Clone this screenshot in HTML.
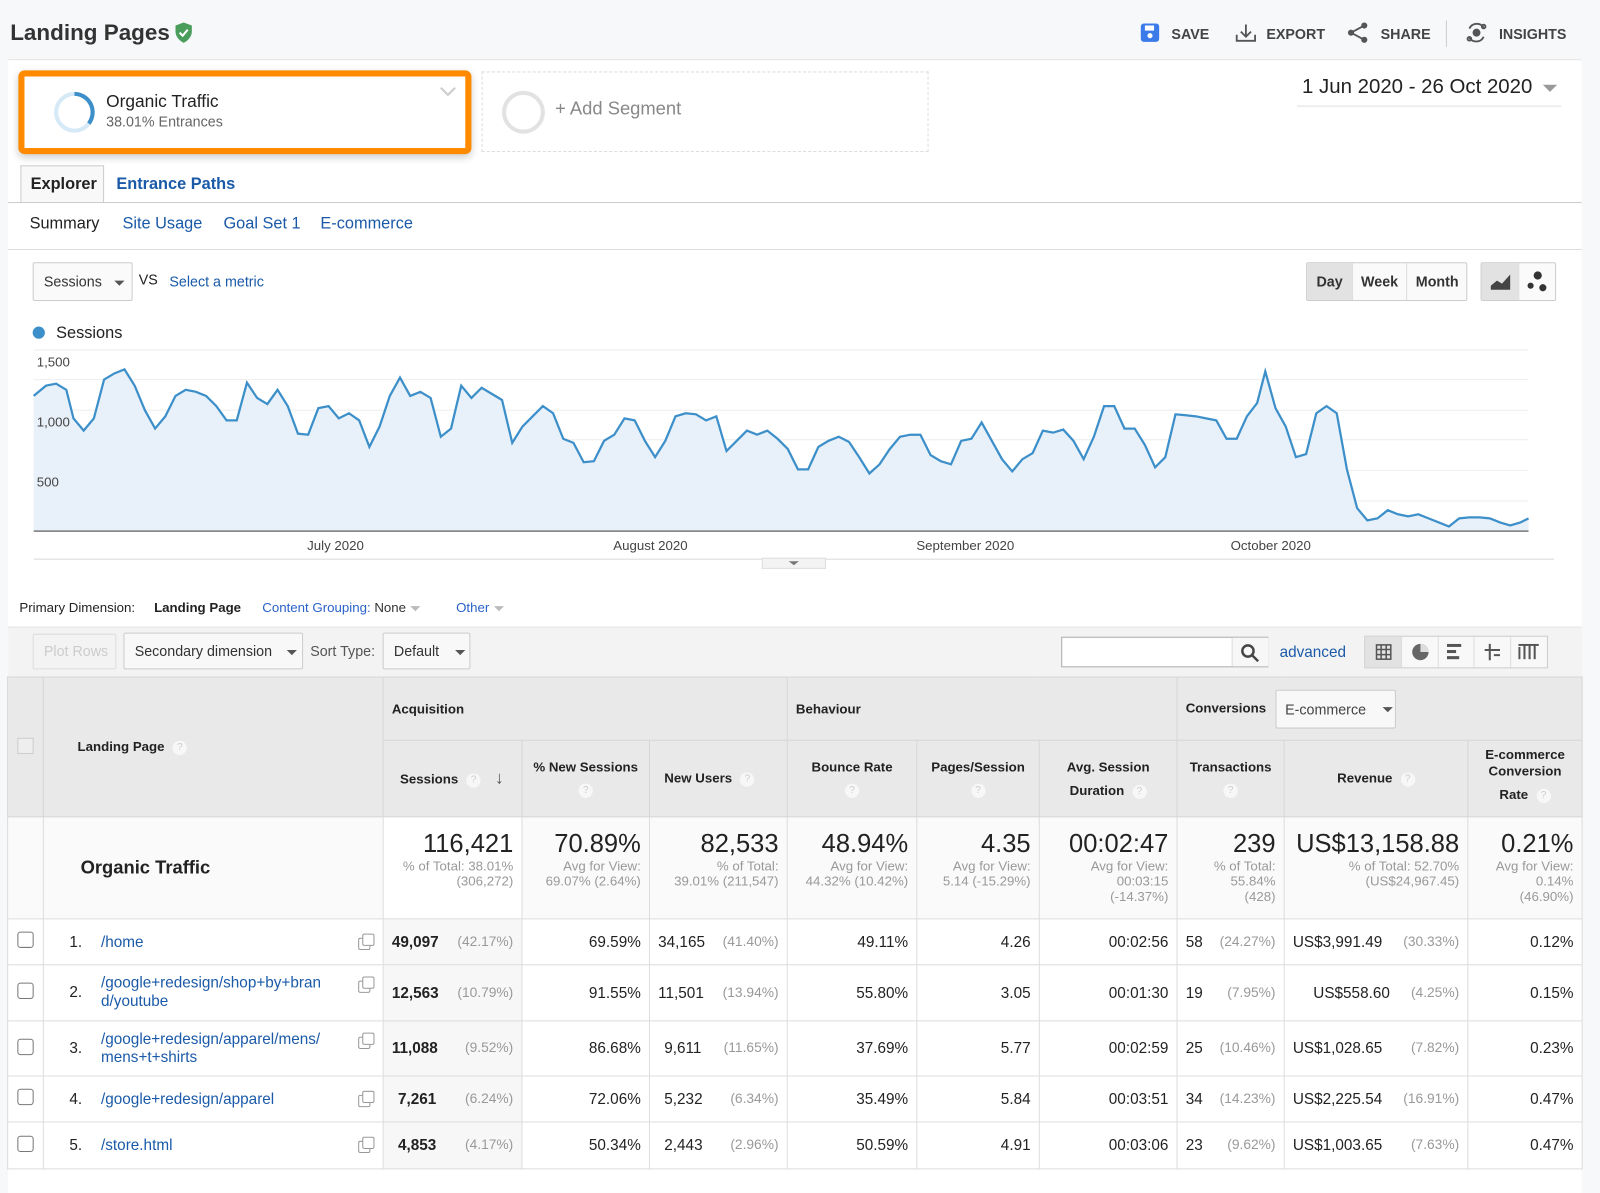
<!DOCTYPE html>
<html><head><meta charset="utf-8">
<style>
*{box-sizing:border-box;margin:0;padding:0}
html,body{width:1600px;height:1169px;overflow:hidden;background:#f7f8fa}
#w{position:absolute;left:0;top:0;width:1568px;height:1146px;transform:scale(1.0204);transform-origin:0 0;font-family:"Liberation Sans",Arial,sans-serif;color:#222}
.a{position:absolute}
.blue{color:#1a5aa8}
.main{position:absolute;left:8px;top:58px;width:1542px;height:1111px;background:#fff;border-top:1px solid #e3e3e3}
.btn{position:absolute;border:1px solid #ccc;border-radius:2px;background:#f6f6f6;font-size:14px;color:#333;line-height:36px;padding:0 10px;white-space:nowrap}
.tri{display:inline-block;width:0;height:0;border-left:5px solid transparent;border-right:5px solid transparent;border-top:5px solid #555;vertical-align:middle;margin-left:12px}
table{border-collapse:collapse;table-layout:fixed}
td{border:1px solid #ddd;font-size:15px;padding:0 8px;vertical-align:middle;white-space:nowrap}
th{border:1px solid #d6d6d6;background:#e9e9e9;font-size:13px;font-weight:bold;padding:0 6px;color:#222}
.q{display:inline-block;width:14px;height:14px;border-radius:7px;background:#f7f7f7;color:#ccc;font-size:10px;line-height:14px;text-align:center;font-weight:normal;margin-left:8px;vertical-align:middle}
.r{text-align:right}
.g{color:#999;font-size:13.5px}
.big{font-size:25px;color:#222;line-height:28px}
.sm{font-size:13px;color:#999;line-height:15px;white-space:nowrap}
.cb{display:inline-block;width:16px;height:16px;border:1.5px solid #777;border-radius:3px}
.ic{float:right;display:inline-block;width:16px;height:16px;position:relative}
.ic:before{content:"";position:absolute;left:0;top:4px;width:10px;height:10px;border:1.3px solid #999;border-radius:2px;background:#fff}
.ic:after{content:"";position:absolute;left:4px;top:0;width:10px;height:10px;border:1.3px solid #999;border-radius:2px;background:#fff}
.num{display:inline-block;width:48px;padding-left:17px}
</style></head><body><div id="w">
<div class="a" style="left:10px;top:19px;font-size:22px;font-weight:bold;color:#333">Landing Pages</div>
<svg class="a" style="left:170px;top:21px" width="20" height="22" viewBox="0 0 20 22"><path d="M10 1 L18 4 V10 C18 15 14 19 10 21 C6 19 2 15 2 10 V4 Z" fill="#4a9d5b"/><path d="M6 11 L9 14 L14 8" stroke="#fff" stroke-width="2" fill="none"/></svg>
<svg class="a" style="left:1117px;top:22px" width="20" height="20"><rect x="1" y="1" width="18" height="18" rx="3" fill="#3b7be9"/><rect x="5" y="3" width="9" height="5" fill="#fff"/><circle cx="10" cy="13" r="2.5" fill="#fff"/></svg>
<div class="a" style="left:1148px;top:25px;font-size:14px;font-weight:bold;color:#444">SAVE</div>
<svg class="a" style="left:1210px;top:22px" width="22" height="20" fill="none" stroke="#555" stroke-width="1.8"><path d="M11 2 V13 M6 9 L11 14 L16 9 M2 12 V18 H20 V12"/></svg>
<div class="a" style="left:1241px;top:25px;font-size:14px;font-weight:bold;color:#444">EXPORT</div>
<svg class="a" style="left:1320px;top:21px" width="22" height="22" fill="#555"><circle cx="17" cy="4" r="3"/><circle cx="4" cy="11" r="3"/><circle cx="17" cy="18" r="3"/><path d="M17 4 L4 11 L17 18" stroke="#555" stroke-width="1.8" fill="none"/></svg>
<div class="a" style="left:1353px;top:25px;font-size:14px;font-weight:bold;color:#444">SHARE</div>
<div class="a" style="left:1417px;top:20px;width:1px;height:26px;background:#ccc"></div>
<svg class="a" style="left:1435px;top:21px" width="24" height="22" fill="none" stroke="#555" stroke-width="1.8"><path d="M5 7 A8 8 0 0 1 19 6 M19 15 A8 8 0 0 1 5 16"/><circle cx="12" cy="11" r="3" fill="#555"/><circle cx="19" cy="5" r="1.8"/><circle cx="5" cy="17" r="1.8"/></svg>
<div class="a" style="left:1469px;top:25px;font-size:14px;font-weight:bold;color:#444">INSIGHTS</div>
<div class="main"></div>
<div class="a" style="left:1550px;top:58px;width:50px;height:1111px;background:#f7f8fa"></div>
<div class="a" style="left:18px;top:69px;width:444px;height:82px;border:6px solid #ff8a00;border-radius:6px;background:#fff;box-shadow:0 3px 8px rgba(0,0,0,.2)"></div>
<svg class="a" style="left:51px;top:88px" width="44" height="44"><circle cx="22" cy="22" r="18" fill="none" stroke="#d6e9f7" stroke-width="4"/><path d="M22 4 A18 18 0 0 1 36 33" fill="none" stroke="#3d8fc9" stroke-width="4"/></svg>
<div class="a" style="left:104px;top:90px;font-size:17px;color:#222">Organic Traffic</div>
<div class="a" style="left:104px;top:111px;font-size:14px;color:#666">38.01% Entrances</div>
<svg class="a" style="left:430px;top:84px" width="18" height="12" fill="none" stroke="#ccc" stroke-width="2"><path d="M2 2 L9 9 L16 2"/></svg>
<div class="a" style="left:472px;top:70px;width:438px;height:79px;border:1px dashed #ddd"></div>
<div class="a" style="left:492px;top:89px;width:42px;height:42px;border:4px solid #e2e2e2;border-radius:50%"></div>
<div class="a" style="left:544px;top:96px;font-size:18px;color:#888">+ Add Segment</div>
<div class="a" style="left:1276px;top:74px;font-size:20px;color:#222;white-space:nowrap">1 Jun 2020 - 26 Oct 2020</div>
<div class="a" style="left:1512px;top:83px;border-left:7px solid transparent;border-right:7px solid transparent;border-top:7px solid #999"></div>
<div class="a" style="left:1271px;top:103px;width:259px;height:2px;background:#eee"></div>
<div class="a" style="left:20px;top:162px;width:82px;height:37px;border:1px solid #ccc;border-bottom:none;background:#f8f8f8"></div>
<div class="a" style="left:8px;top:198px;width:1542px;height:1px;background:#ccc"></div>
<div class="a" style="left:30px;top:172px;font-size:16px;font-weight:bold;color:#222">Explorer</div>
<div class="a blue" style="left:114px;top:172px;font-size:16px;font-weight:bold">Entrance Paths</div>
<div class="a" style="left:29px;top:211px;font-size:16px;color:#222">Summary</div>
<div class="a blue" style="left:120px;top:211px;font-size:16px">Site Usage</div>
<div class="a blue" style="left:219px;top:211px;font-size:16px">Goal Set 1</div>
<div class="a blue" style="left:314px;top:211px;font-size:16px">E-commerce</div>
<div class="a" style="left:8px;top:244px;width:1542px;height:1px;background:#ddd"></div>
<div class="btn" style="left:32px;top:257px;width:98px;background:#fafafa">Sessions<span class="tri"></span></div>
<div class="a" style="left:136px;top:266px;font-size:14px">VS</div>
<div class="a blue" style="left:166px;top:268px;font-size:14px">Select a metric</div>
<div class="a" style="left:1280px;top:257px;width:158px;height:38px;border:1px solid #ccc;border-radius:2px;background:#fafafa;font-size:14px;font-weight:bold;color:#333;line-height:36px">
<span class="a" style="left:0;top:0;width:44px;height:36px;background:#e2e2e2;text-align:center">Day</span>
<span class="a" style="left:44px;top:0;width:53px;height:36px;border-left:1px solid #ddd;text-align:center">Week</span>
<span class="a" style="left:97px;top:0;width:60px;height:36px;border-left:1px solid #ddd;text-align:center">Month</span></div>
<div class="a" style="left:1451px;top:257px;width:74px;height:38px;border:1px solid #ccc;border-radius:2px;background:#fafafa"><div class="a" style="left:0;top:0;width:37px;height:36px;background:#e2e2e2"></div>
<svg class="a" style="left:8px;top:8px" width="22" height="20"><path d="M1 18 L1 14 L7 9 L12 12 L20 3 L20 18 Z" fill="#444"/></svg>
<svg class="a" style="left:43px;top:7px" width="24" height="22" fill="#333"><circle cx="12" cy="5" r="4"/><circle cx="5" cy="15" r="3"/><circle cx="17" cy="17" r="3.5"/></svg></div>
<div class="a" style="left:32px;top:320px;width:12px;height:12px;border-radius:6px;background:#3d8fc9"></div>
<div class="a" style="left:55px;top:318px;font-size:16px;color:#222">Sessions</div>
<svg class="a" style="left:0;top:330px" width="1550" height="230">
<g stroke="#eee" stroke-width="1"><line x1="33" x2="1498" y1="13" y2="13"/><line x1="33" x2="1498" y1="42" y2="42"/><line x1="33" x2="1498" y1="72" y2="72"/><line x1="33" x2="1498" y1="101" y2="101"/><line x1="33" x2="1498" y1="131" y2="131"/><line x1="33" x2="1498" y1="161" y2="161"/></g>
<g transform="translate(0,-330)">
<polygon fill="#e8f1f9" points="33,520 33,388 45,378 55,376 65,382 72,410 82,422 92,410 102,372 112,366 122,362 132,378 142,402 152,420 162,408 172,388 182,382 192,384 202,388 212,398 222,412 232,412 242,375 252,390 262,396 272,382 282,398 292,425 302,426 312,400 322,398 332,410 342,405 352,412 362,438 372,418 382,388 392,370 402,388 412,384 422,390 432,428 442,420 452,378 462,390 472,380 482,386 492,392 502,434 512,418 522,408 532,398 542,405 552,430 562,434 572,453 582,452 592,432 602,426 612,410 622,412 632,432 642,448 652,432 662,408 672,405 682,406 692,412 702,408 712,442 722,432 732,422 742,426 752,422 762,430 772,440 782,460 792,460 802,438 812,432 822,428 832,433 842,448 852,464 862,455 872,440 882,428 892,426 902,426 912,446 922,452 932,455 942,432 952,430 962,414 972,432 982,450 992,462 1002,450 1012,444 1022,422 1032,424 1042,421 1052,432 1062,450 1072,428 1082,398 1092,398 1102,420 1112,420 1122,436 1132,458 1142,448 1152,406 1162,407 1172,408 1182,410 1192,412 1202,430 1212,430 1222,408 1232,395 1240,364 1250,400 1260,418 1270,448 1280,445 1290,405 1300,398 1310,405 1320,460 1330,498 1340,510 1350,508 1360,500 1370,504 1380,506 1390,504 1400,508 1410,512 1420,516 1430,508 1440,507 1450,507 1460,508 1470,512 1480,515 1490,512 1498,508 1498,520"/>
<polyline fill="none" stroke="#3d8fc9" stroke-width="2.2" points="33,388 45,378 55,376 65,382 72,410 82,422 92,410 102,372 112,366 122,362 132,378 142,402 152,420 162,408 172,388 182,382 192,384 202,388 212,398 222,412 232,412 242,375 252,390 262,396 272,382 282,398 292,425 302,426 312,400 322,398 332,410 342,405 352,412 362,438 372,418 382,388 392,370 402,388 412,384 422,390 432,428 442,420 452,378 462,390 472,380 482,386 492,392 502,434 512,418 522,408 532,398 542,405 552,430 562,434 572,453 582,452 592,432 602,426 612,410 622,412 632,432 642,448 652,432 662,408 672,405 682,406 692,412 702,408 712,442 722,432 732,422 742,426 752,422 762,430 772,440 782,460 792,460 802,438 812,432 822,428 832,433 842,448 852,464 862,455 872,440 882,428 892,426 902,426 912,446 922,452 932,455 942,432 952,430 962,414 972,432 982,450 992,462 1002,450 1012,444 1022,422 1032,424 1042,421 1052,432 1062,450 1072,428 1082,398 1092,398 1102,420 1112,420 1122,436 1132,458 1142,448 1152,406 1162,407 1172,408 1182,410 1192,412 1202,430 1212,430 1222,408 1232,395 1240,364 1250,400 1260,418 1270,448 1280,445 1290,405 1300,398 1310,405 1320,460 1330,498 1340,510 1350,508 1360,500 1370,504 1380,506 1390,504 1400,508 1410,512 1420,516 1430,508 1440,507 1450,507 1460,508 1470,512 1480,515 1490,512 1498,508"/>
<line x1="33" x2="1498" y1="520.5" y2="520.5" stroke="#777" stroke-width="1.5"/>
<line x1="33" x2="1523" y1="548" y2="548" stroke="#ddd"/>
<rect x="747" y="547" width="62" height="10" fill="#f3f3f3" stroke="#ddd"/>
<path d="M773 550 L778 554 L783 550Z" fill="#777"/>
</g>
<g font-family="Liberation Sans" font-size="13" fill="#444"><text x="36" y="29">1,500</text><text x="36" y="88">1,000</text><text x="36" y="147">500</text>
<text x="301" y="209">July 2020</text><text x="601" y="209">August 2020</text><text x="898" y="209">September 2020</text><text x="1206" y="209">October 2020</text></g>
</svg>
<div class="a" style="left:19px;top:588px;font-size:13px;color:#222">Primary Dimension:</div>
<div class="a" style="left:151px;top:588px;font-size:13px;font-weight:bold;color:#222">Landing Page</div>
<div class="a" style="left:257px;top:588px;font-size:13px;white-space:nowrap"><span style="color:#2a62c9">Content Grouping:</span> <span style="color:#333">None</span><span class="tri" style="border-top-color:#bbb;margin-left:4px"></span></div>
<div class="a" style="left:447px;top:588px;font-size:13px;color:#2a62c9;white-space:nowrap">Other<span class="tri" style="border-top-color:#bbb;margin-left:4px"></span></div>
<div class="a" style="left:8px;top:614px;width:1542px;height:49px;background:#f3f3f3;border-top:1px solid #e3e3e3"></div>
<div class="btn" style="left:32px;top:621px;width:82px;height:35px;line-height:33px;color:#ccc;background:#f3f3f3;border-color:#ddd">Plot Rows</div>
<div class="btn" style="left:121px;top:620px;width:176px;height:36px;line-height:34px;background:#f8f8f8">Secondary dimension<span class="tri" style="margin-left:14px"></span></div>
<div class="a" style="left:304px;top:630px;font-size:14px;color:#555">Sort Type:</div>
<div class="btn" style="left:375px;top:620px;width:86px;height:36px;line-height:34px;background:#f8f8f8">Default<span class="tri" style="margin-left:16px"></span></div>
<div class="a" style="left:1040px;top:624px;width:203px;height:30px;border:1px solid #aaa;background:#fff"><div class="a" style="left:166px;top:0;width:36px;height:28px;border-left:1px solid #ddd;background:#f7f7f7"></div>
<svg class="a" style="left:174px;top:5px" width="20" height="20" fill="none" stroke="#444" stroke-width="2.4"><circle cx="8" cy="8" r="5.5"/><path d="M12 12 L18 18"/></svg></div>
<div class="a blue" style="left:1254px;top:631px;font-size:15px">advanced</div>
<div class="a" style="left:1337px;top:623px;width:180px;height:32px;border:1px solid #ccc;background:#f8f8f8">
<div class="a" style="left:0;top:0;width:35px;height:30px;background:#e2e2e2"></div>
<div class="a" style="left:35px;top:0;width:1px;height:30px;background:#ddd"></div><div class="a" style="left:71px;top:0;width:1px;height:30px;background:#ddd"></div><div class="a" style="left:106px;top:0;width:1px;height:30px;background:#ddd"></div><div class="a" style="left:142px;top:0;width:1px;height:30px;background:#ddd"></div>
<svg class="a" style="left:10px;top:7px" width="16" height="16" fill="none" stroke="#555" stroke-width="1.5"><rect x="1" y="1" width="14" height="14"/><path d="M1 5.5 H15 M1 10.5 H15 M5.5 1 V15 M10.5 1 V15"/></svg>
<svg class="a" style="left:45px;top:6px" width="18" height="18"><circle cx="9" cy="9" r="8" fill="#666"/><path d="M9 1 V9 H17 A8 8 0 0 0 9 1Z" fill="#ddd"/></svg>
<svg class="a" style="left:80px;top:7px" width="18" height="16" fill="#555"><rect x="0" y="0" width="14" height="3"/><rect x="0" y="6" width="9" height="3"/><rect x="0" y="12" width="12" height="3"/></svg>
<svg class="a" style="left:116px;top:6px" width="18" height="18" fill="none" stroke="#555" stroke-width="2"><path d="M6 1 V17 M1 7 H16 M10 12 H16"/></svg>
<svg class="a" style="left:150px;top:7px" width="22" height="16" fill="#555"><rect x="0" y="3" width="2" height="12"/><rect x="5" y="1" width="2" height="14"/><rect x="10" y="1" width="2" height="14"/><rect x="15" y="1" width="2" height="14"/><rect x="0" y="0" width="20" height="2"/></svg>
</div>
<table class="a" style="left:7px;top:663px;width:1543px">
<colgroup><col style="width:35px"><col style="width:333px"><col style="width:136px"><col style="width:125px"><col style="width:135px"><col style="width:127px"><col style="width:120px"><col style="width:135px"><col style="width:105px"><col style="width:180px"><col style="width:112px"></colgroup>
<tr style="height:62px"><th rowspan="2" style="text-align:center"><span style="display:inline-block;width:16px;height:16px;border:1px solid #ccc;background:#eee"></span></th>
<th rowspan="2" style="text-align:left;padding-left:33px">Landing Page<span class="q">?</span></th>
<th colspan="3" style="text-align:left;padding-left:8px">Acquisition</th>
<th colspan="3" style="text-align:left;padding-left:8px">Behaviour</th>
<th colspan="3" style="text-align:left;padding-left:8px">Conversions <span style="display:inline-block;margin-left:6px;width:118px;height:38px;border:1px solid #ccc;background:#f8f8f8;border-radius:2px;font-weight:normal;font-size:14px;color:#444;line-height:36px;padding-left:8px;vertical-align:middle">E-commerce<span class="tri" style="margin-left:16px"></span></span></th></tr>
<tr style="height:75px">
<th style="text-align:left;padding-left:16px">Sessions<span class="q">?</span><span style="font-size:17px;color:#555;margin-left:14px">&#8595;</span></th>
<th style="text-align:center;line-height:22px">% New Sessions<br><span class="q" style="margin:0">?</span></th>
<th style="text-align:left;padding-left:14px">New Users<span class="q">?</span></th>
<th style="text-align:center;line-height:22px">Bounce Rate<br><span class="q" style="margin:0">?</span></th>
<th style="text-align:center;line-height:22px">Pages/Session<br><span class="q" style="margin:0">?</span></th>
<th style="text-align:center;line-height:23px">Avg. Session<br>Duration<span class="q">?</span></th>
<th style="text-align:center;line-height:22px">Transactions<br><span class="q" style="margin:0">?</span></th>
<th style="text-align:center">Revenue<span class="q">?</span></th>
<th style="text-align:center;line-height:16px">E-commerce<br>Conversion<br><span style="line-height:30px">Rate</span><span class="q">?</span></th></tr>
<tr style="height:100px;background:#fafafa">
<td></td><td style="padding-left:36px;font-size:18px;font-weight:bold">Organic Traffic</td>
<td class="r" style="background:#fff;vertical-align:top;padding-top:12px"><div class="big">116,421</div><div class="sm">% of Total: 38.01%<br>(306,272)</div></td>
<td class="r" style="vertical-align:top;padding-top:12px"><div class="big">70.89%</div><div class="sm">Avg for View:<br>69.07% (2.64%)</div></td>
<td class="r" style="vertical-align:top;padding-top:12px"><div class="big">82,533</div><div class="sm">% of Total:<br>39.01% (211,547)</div></td>
<td class="r" style="vertical-align:top;padding-top:12px"><div class="big">48.94%</div><div class="sm">Avg for View:<br>44.32% (10.42%)</div></td>
<td class="r" style="vertical-align:top;padding-top:12px"><div class="big">4.35</div><div class="sm">Avg for View:<br>5.14 (-15.29%)</div></td>
<td class="r" style="vertical-align:top;padding-top:12px"><div class="big">00:02:47</div><div class="sm">Avg for View:<br>00:03:15<br>(-14.37%)</div></td>
<td class="r" style="vertical-align:top;padding-top:12px"><div class="big">239</div><div class="sm">% of Total:<br>55.84%<br>(428)</div></td>
<td class="r" style="vertical-align:top;padding-top:12px"><div class="big">US$13,158.88</div><div class="sm">% of Total: 52.70%<br>(US$24,967.45)</div></td>
<td class="r" style="vertical-align:top;padding-top:12px"><div class="big">0.21%</div><div class="sm">Avg for View:<br>0.14%<br>(46.90%)</div></td></tr>
<tr style="height:45px"><td style="text-align:center"><span class="cb"></span></td><td><span class="num">1.</span><span class="blue">/home</span><span class="ic"></span></td><td style="background:#f7f7f7"><b>49,097</b> <span class="g" style="float:right">(42.17%)</span></td><td class="r">69.59%</td><td>34,165 <span class="g" style="float:right">(41.40%)</span></td><td class="r">49.11%</td><td class="r">4.26</td><td class="r">00:02:56</td><td>58 <span class="g" style="float:right">(24.27%)</span></td><td>US$3,991.49 <span class="g" style="float:right">(30.33%)</span></td><td class="r">0.12%</td></tr>
<tr style="height:55px"><td style="text-align:center"><span class="cb"></span></td><td style="line-height:18px;white-space:normal"><div style="float:left;width:40px;padding-left:17px;line-height:36px">2.</div><span class="ic" style="margin-top:2px"></span><div class="blue" style="margin-left:48px;width:250px">/google+redesign/shop+by+bran d/youtube</div></td><td style="background:#f7f7f7"><b>12,563</b> <span class="g" style="float:right">(10.79%)</span></td><td class="r">91.55%</td><td>11,501 <span class="g" style="float:right">(13.94%)</span></td><td class="r">55.80%</td><td class="r">3.05</td><td class="r">00:01:30</td><td>19 <span class="g" style="float:right">(7.95%)</span></td><td style="padding-left:28px">US$558.60 <span class="g" style="float:right">(4.25%)</span></td><td class="r">0.15%</td></tr>
<tr style="height:54px"><td style="text-align:center"><span class="cb"></span></td><td style="line-height:18px;white-space:normal"><div style="float:left;width:40px;padding-left:17px;line-height:36px">3.</div><span class="ic" style="margin-top:2px"></span><div class="blue" style="margin-left:48px;width:250px">/google+redesign/apparel/mens/ mens+t+shirts</div></td><td style="background:#f7f7f7"><b>11,088</b> <span class="g" style="float:right">(9.52%)</span></td><td class="r">86.68%</td><td style="padding-left:14px">9,611 <span class="g" style="float:right">(11.65%)</span></td><td class="r">37.69%</td><td class="r">5.77</td><td class="r">00:02:59</td><td>25 <span class="g" style="float:right">(10.46%)</span></td><td>US$1,028.65 <span class="g" style="float:right">(7.82%)</span></td><td class="r">0.23%</td></tr>
<tr style="height:45px"><td style="text-align:center"><span class="cb"></span></td><td><span class="num">4.</span><span class="blue">/google+redesign/apparel</span><span class="ic"></span></td><td style="background:#f7f7f7;padding-left:14px"><b>7,261</b> <span class="g" style="float:right">(6.24%)</span></td><td class="r">72.06%</td><td style="padding-left:14px">5,232 <span class="g" style="float:right">(6.34%)</span></td><td class="r">35.49%</td><td class="r">5.84</td><td class="r">00:03:51</td><td>34 <span class="g" style="float:right">(14.23%)</span></td><td>US$2,225.54 <span class="g" style="float:right">(16.91%)</span></td><td class="r">0.47%</td></tr>
<tr style="height:46px"><td style="text-align:center"><span class="cb"></span></td><td><span class="num">5.</span><span class="blue">/store.html</span><span class="ic"></span></td><td style="background:#f7f7f7;padding-left:14px"><b>4,853</b> <span class="g" style="float:right">(4.17%)</span></td><td class="r">50.34%</td><td style="padding-left:14px">2,443 <span class="g" style="float:right">(2.96%)</span></td><td class="r">50.59%</td><td class="r">4.91</td><td class="r">00:03:06</td><td>23 <span class="g" style="float:right">(9.62%)</span></td><td>US$1,003.65 <span class="g" style="float:right">(7.63%)</span></td><td class="r">0.47%</td></tr>
</table>
</div></body></html>
